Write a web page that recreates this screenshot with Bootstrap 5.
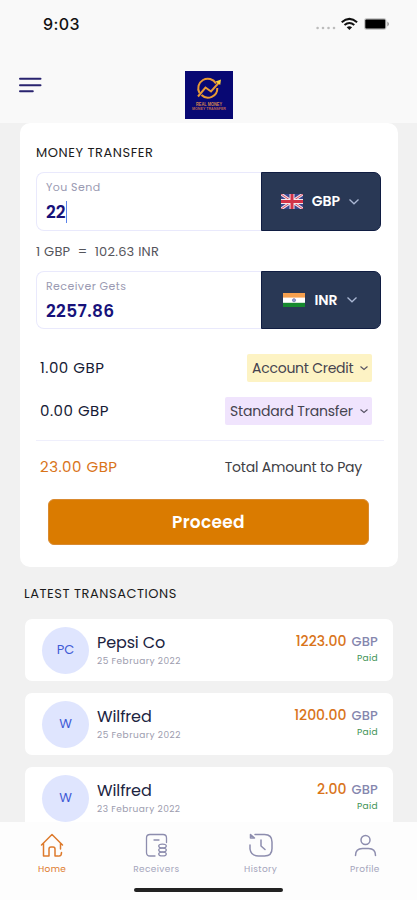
<!DOCTYPE html>
<html lang="en">
<head>
<meta charset="utf-8">
<meta name="viewport" content="width=device-width, initial-scale=1">
<title>Money Transfer</title>
<link href="https://cdn.jsdelivr.net/npm/bootstrap@5.3.0/dist/css/bootstrap.min.css" rel="stylesheet">
<style>
  body { font-family: Poppins, Inter, "Liberation Sans", sans-serif; background: #f1f1f1; color: #151a35; }
  .screen { width: 417px; height: 900px; }
  .topbar { height: 123px; background: #f9f9f9; }
  .status { height: 48px; padding: 0 26px 0 43px; }
  .clock { font-family: Inter, "Liberation Sans", sans-serif; font-size: 16px; font-weight: 500; color: #111; letter-spacing: .4px; line-height: 48px; }
  .brand-row { height: 75px; padding: 23px 0 0 18px; }
  .menu-icon { margin-top: 5px; }
  .brand-logo { margin-left: 143px; }
  .transfer { margin: 0 19px 0 20px; height: 444px; border-radius: 10px; padding: 22px 17px 0 16px; }
  .heading { font-size: 13px; line-height: 16px; color: #1c1c1c; font-weight: 400; letter-spacing: .54px; margin: 0; }
  .money { height: 59px; }
  .money-send { margin-top: 11px; }
  .money-get { height: 58px; }
  .entry { width: 225px; border: 1px solid #e9e9fc; border-right: 0; border-radius: 8px 0 0 8px; padding: 6px 0 0 9px; }
  .entry-label { font-size: 11px; line-height: 16px; color: #9a9ab2; letter-spacing: .42px; }
  .entry-value { font-size: 17px; line-height: 24px; margin-top: 5px; font-weight: 600; color: #17127a; }
  .v-get { letter-spacing: .35px; }
  .caret { width: 1px; height: 22px; background: #5b83ea; }
  .currency { width: 120px; background: #293855; border: 1px solid #101d42; border-radius: 0 7px 7px 0; font-size: 14px; font-weight: 600; padding-right: 1px; }
  .code { margin: 0 8px 0 9px; }
  .rate { font-size: 13px; line-height: 41px; height: 40px; color: #55555c; white-space: pre; letter-spacing: .22px; }
  .fees { margin-top: 25px; gap: 15px; }
  .fee { height: 28px; font-size: 15px; padding: 0 9px 0 4px; }
  .amount { font-size: 15px; letter-spacing: .5px; }
  .pick { height: 28px; padding: 0 3px 0 5px; font-size: 14px; color: #45434f; border-radius: 2px; white-space: nowrap; }
  .pick-credit { background: #fdf3c4; width: 125px; letter-spacing: -.25px; }
  .pick-standard { background: #f0e4fd; width: 147px; letter-spacing: -.2px; }
  .rule { height: 1px; background: #efeffc; margin: 15px -3px 0 0; }
  .total { height: 28px; margin-top: 12px; padding: 0 19px 0 4px; }
  .total-label { font-size: 14px; color: #404045; letter-spacing: -.2px; }
  .orange { color: #d9741a; }
  .proceed, .proceed:hover { width: 321px; height: 46px; background: #da7b00; border: 1px solid #d98a30; border-radius: 6px; color: #fff; font-size: 17px; font-weight: 600; letter-spacing: .3px; padding: 1px 0 0; margin: 18px 0 0 12px; }
  .latest { margin: 19px 0 0 24px; }
  .history { margin: 17px 24px 0 25px; height: 203px; overflow: hidden; gap: 12px; }
  .entry-row { height: 62px; flex: none; border-radius: 7px; padding: 0 15px 0 17px; }
  .avatar { width: 47px; height: 47px; background: #dfe5fe; color: #3f5bd6; font-size: 13px; }
  .who { font-size: 16px; line-height: 20px; color: #20243f; letter-spacing: -.12px; }
  .when { font-size: 9px; line-height: 14px; margin-top: 1px; color: #9c9cae; letter-spacing: .45px; }
  .gets { margin-top: -3px; }
  .sum { font-size: 13px; line-height: 18px; font-weight: 500; }
  .sum .orange { font-size: 14px; }
  .unit { color: #8587ae; margin-left: 5px; letter-spacing: .2px; }
  .paid { font-size: 9px; line-height: 14px; color: #3d9354; letter-spacing: .35px; }
  .tabs { height: 78px; background: #fdfdfd; padding-top: 9px; }
  .tab { width: 104.4px; color: #8d8dae; font-size: 9px; }
  .tab svg { width: 28px; height: 28px; }
  .tab-text { line-height: 12px; margin-top: 4px; color: #a5a5bc; letter-spacing: .35px; }
  .tab.active, .tab.active .tab-text { color: #dd7a2c; }
  .home-bar { width: 149px; height: 4px; border-radius: 2px; background: #222; margin: 13px 0 0 134px; }
</style>
</head>
<body>
<div class="screen d-flex flex-column overflow-hidden">
  <header class="topbar flex-shrink-0">
    <div class="status d-flex justify-content-between align-items-center">
      <span class="clock">9:03</span>
      <svg width="75" height="16" viewBox="0 0 75 16">
        <g fill="#bcbcbc"><circle cx="1.600" cy="12" r="1.300"/><circle cx="7" cy="12" r="1.300"/><circle cx="12.500" cy="12" r="1.300"/><circle cx="18" cy="12" r="1.300"/></g>
        <g fill="none" stroke="#111" stroke-width="2"><path d="M25.700 6.200q7.700-6.600 15.400 0"/><path d="M28.500 9.100q4.900-4.300 9.800 0"/></g>
        <path d="M30.700 11.200q2.700-2.100 5.400 0l-2.700 2.700z" fill="#111"/>
        <rect x="48" y="2" width="22.500" height="12" rx="3" fill="#c9c9c9"/><rect x="49.300" y="3.500" width="20" height="9" rx="1" fill="#000"/><path d="M71.500 5.500q2.500 2.500 0 5z" fill="#777"/>
      </svg>
    </div>
    <div class="brand-row d-flex align-items-start">
      <svg class="menu-icon" width="24" height="18" viewBox="0 0 24 18"><path d="M2 2.800h20.500M2 9.300h20.500M2 15.200h12.800" stroke="#29236f" stroke-width="2" stroke-linecap="round"/></svg>
      <svg class="brand-logo" width="48" height="48" viewBox="0 0 48 48">
        <rect width="48" height="48" fill="#080873"/>
        <g fill="none" stroke="#e89a35" stroke-width="2"><path d="M31 12.500A9.300 9.300 0 0 0 14.500 22M16.500 24A9.300 9.300 0 0 0 32.300 17"/><path d="M13 25.500l7.500-9 5.500 4L34 11.500"/></g>
        <path d="M30.500 10.500l5.500-2-.8 5.500z" fill="#f6cf3b"/>
        <text x="24" y="34.500" text-anchor="middle" textLength="26" lengthAdjust="spacingAndGlyphs" font-family="Liberation Sans, sans-serif" font-size="5" font-weight="700" fill="#d3834f">REAL MONEY</text>
        <text x="24" y="39" text-anchor="middle" textLength="34" lengthAdjust="spacingAndGlyphs" font-family="Liberation Sans, sans-serif" font-size="3" font-weight="700" fill="#bb6651">MONEY TRANSFER</text>
      </svg>
    </div>
  </header>

  <main class="flex-shrink-0">
    <section class="transfer bg-white">
      <h1 class="heading">MONEY TRANSFER</h1>
      <div class="money money-send d-flex">
        <div class="entry"><div class="entry-label">You Send</div><div class="entry-value d-flex align-items-center">22<span class="caret"></span></div></div>
        <div class="currency text-white d-flex align-items-center justify-content-center">
          <svg width="22" height="15" viewBox="0 0 22 15"><path fill="#39458f" d="M0 0h22v15H0z"/><path d="M0 0l22 15M22 0L0 15" stroke="#f2dfe5" stroke-width="3"/><path d="M0 0l22 15M22 0L0 15" stroke="#d84a60" stroke-width="1"/><path d="M11 0v15M0 7.500h22" stroke="#f4e6ea" stroke-width="5"/><path d="M11 0v15M0 7.500h22" stroke="#d23248" stroke-width="3"/></svg>
          <span class="code">GBP</span>
          <svg width="12" height="8" viewBox="0 0 12 8"><path d="M1.500 1.500L6 5.800l4.500-4.300" fill="none" stroke="#aab7d3" stroke-width="1.300"/></svg>
        </div>
      </div>
      <div class="rate">1 GBP  =  102.63 INR</div>
      <div class="money money-get d-flex">
        <div class="entry"><div class="entry-label">Receiver Gets</div><div class="entry-value v-get">2257.86</div></div>
        <div class="currency text-white d-flex align-items-center justify-content-center">
          <svg width="22" height="14" viewBox="0 0 22 14"><path fill="#fff" d="M0 0h22v14H0z"/><path fill="#f6a04e" d="M0 0h22v4.600H0z"/><path fill="#16892f" d="M0 9.800h22V14H0z"/><circle cx="11" cy="7.200" r="1.600" fill="#9aa0cd" stroke="#5259a0" stroke-width=".5"/></svg>
          <span class="code">INR</span>
          <svg width="12" height="8" viewBox="0 0 12 8"><path d="M1.500 1.500L6 5.800l4.500-4.300" fill="none" stroke="#aab7d3" stroke-width="1.300"/></svg>
        </div>
      </div>
      <div class="fees d-flex flex-column">
        <div class="fee d-flex justify-content-between align-items-center"><span class="amount">1.00 GBP</span>
          <div class="pick pick-credit d-flex align-items-center justify-content-between"><span>Account Credit</span><svg width="10" height="8" viewBox="0 0 10 8"><path d="M1.500 2.500L5 5.500l3.500-3" fill="none" stroke="#555162" stroke-width="1.100"/></svg></div></div>
        <div class="fee d-flex justify-content-between align-items-center"><span class="amount">0.00 GBP</span>
          <div class="pick pick-standard d-flex align-items-center justify-content-between"><span>Standard Transfer</span><svg width="10" height="8" viewBox="0 0 10 8"><path d="M1.500 2.500L5 5.500l3.500-3" fill="none" stroke="#555162" stroke-width="1.100"/></svg></div></div>
      </div>
      <div class="rule"></div>
      <div class="total d-flex justify-content-between align-items-center"><span class="orange amount">23.00 GBP</span><span class="total-label">Total Amount to Pay</span></div>
      <button class="btn proceed" type="button">Proceed</button>
    </section>

    <h2 class="heading latest">LATEST TRANSACTIONS</h2>
    <section class="history d-flex flex-column">
      <article class="entry-row bg-white d-flex align-items-center">
        <div class="avatar rounded-circle d-flex align-items-center justify-content-center">PC</div>
        <div class="ms-2"><div class="who">Pepsi Co</div><div class="when">25 February 2022</div></div>
        <div class="gets ms-auto text-end"><div class="sum"><span class="orange">1223.00</span><span class="unit">GBP</span></div><div class="paid">Paid</div></div>
      </article>
      <article class="entry-row bg-white d-flex align-items-center">
        <div class="avatar rounded-circle d-flex align-items-center justify-content-center">W</div>
        <div class="ms-2"><div class="who">Wilfred</div><div class="when">25 February 2022</div></div>
        <div class="gets ms-auto text-end"><div class="sum"><span class="orange">1200.00</span><span class="unit">GBP</span></div><div class="paid">Paid</div></div>
      </article>
      <article class="entry-row bg-white d-flex align-items-center">
        <div class="avatar rounded-circle d-flex align-items-center justify-content-center">W</div>
        <div class="ms-2"><div class="who">Wilfred</div><div class="when">23 February 2022</div></div>
        <div class="gets ms-auto text-end"><div class="sum"><span class="orange">2.00</span><span class="unit">GBP</span></div><div class="paid">Paid</div></div>
      </article>
    </section>
  </main>

  <nav class="tabs flex-shrink-0">
    <div class="d-flex">
      <div class="tab active d-flex flex-column align-items-center"><svg viewBox="0 0 28 28" fill="none" stroke="currentColor" stroke-width="1.500" stroke-linecap="round" stroke-linejoin="round"><path d="M3.500 14L14 3.500 24.500 14M5.500 12.500V25H11v-7q0-2 2-2h2q2 0 2 2v7h3M22.500 12.500V18M23.500 21.500q0 3.500-2.500 3.500"/></svg><span class="tab-text">Home</span></div>
      <div class="tab d-flex flex-column align-items-center"><svg viewBox="0 0 28 28" fill="none" stroke="currentColor" stroke-width="1.300" stroke-linecap="round"><path d="M13 25H8q-3.500 0-3.500-3.500V7q0-3.500 3.500-3.500h13Q24.500 3.500 24.500 7v4.500M12 9h5"/><ellipse cx="20.500" cy="15" rx="3.800" ry="1.900"/><ellipse cx="20.500" cy="19" rx="3.800" ry="1.900"/><ellipse cx="20.500" cy="23" rx="3.800" ry="1.900"/></svg><span class="tab-text">Receivers</span></div>
      <div class="tab d-flex flex-column align-items-center"><svg viewBox="0 0 28 28" fill="none" stroke="currentColor" stroke-width="1.500" stroke-linecap="round" stroke-linejoin="round"><path d="M8 3.500h9.500q7.500 0 7.500 7.500v6.500q0 7.500-7.500 7.500h-6Q4 25 3 18v-4M3.500 3.500v3.500h4zM14 9v6l4 3.500"/></svg><span class="tab-text">History</span></div>
      <div class="tab d-flex flex-column align-items-center"><svg viewBox="0 0 28 28" fill="none" stroke="currentColor" stroke-width="1.500" stroke-linecap="round"><circle cx="14.500" cy="9" r="4.500"/><path d="M4.500 24.500q0-7 7-7h6q7 0 7 7"/></svg><span class="tab-text">Profile</span></div>
    </div>
    <div class="home-bar"></div>
  </nav>
</div>
<script src="https://cdn.jsdelivr.net/npm/bootstrap@5.3.0/dist/js/bootstrap.bundle.min.js"></script>
</body>
</html>
